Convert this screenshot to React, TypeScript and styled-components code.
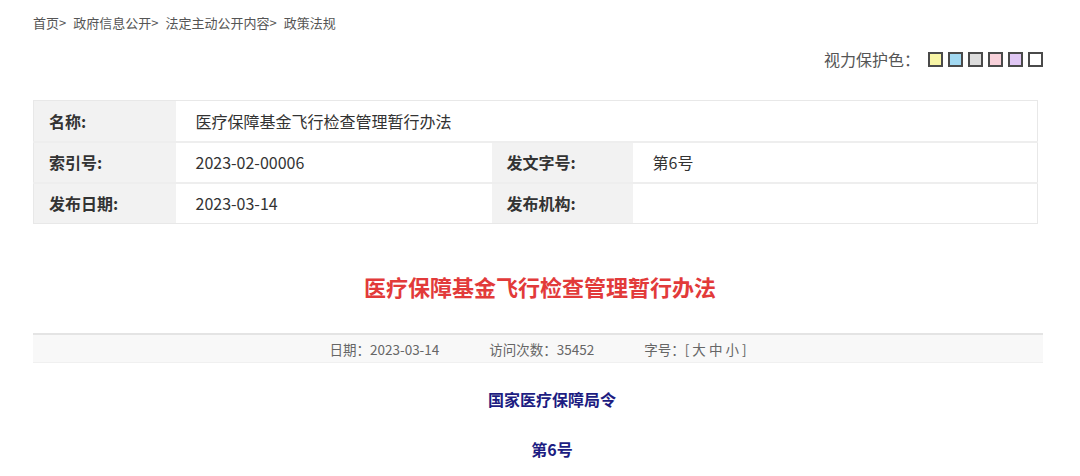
import React from "react";
import styled, { createGlobalStyle } from "styled-components";

const Global = createGlobalStyle`
  html, body { margin: 0; padding: 0; background: #fff; }
  body { font-family: "Noto Sans CJK SC", "Noto Sans", sans-serif; color: #333; }
`;

const Page = styled.div`
  width: 1010px;
  margin-left: 33px;
  padding-top: 13px;
  display: flex;
  flex-direction: column;
`;

const Crumbs = styled.div`
  font-size: 13px;
  line-height: 20px;
  color: #555;
  display: flex;
  gap: 7px;
`;

const Crumb = styled.span``;

const EyeRow = styled.div`
  margin-top: 14px;
  display: flex;
  justify-content: flex-end;
  align-items: center;
  height: 24px;
  width: 1010px;
`;

const EyeLabel = styled.span`
  font-size: 16px;
  color: #555;
  margin-right: 8px;
`;

const Swatches = styled.div`
  display: flex;
  gap: 5px;
`;

const Swatch = styled.span<{ $c: string }>`
  width: 11px;
  height: 11px;
  border: 2px solid #4a4a4a;
  background: ${(p) => p.$c};
  display: block;
`;

const InfoTable = styled.table`
  margin-top: 29px;
  width: 1005px;
  border-collapse: collapse;
  border: 1px solid #e8e8e8;
  table-layout: fixed;
  font-size: 16px;
`;

const Row = styled.tr`
  height: 41px;
  & + & td, & + & th { border-top: 2px solid #eeeeee; }
`;

const Label = styled.th`
  background: #f2f2f2;
  text-align: left;
  font-weight: bold;
  color: #333;
  padding: 0 0 0 15px;
`;

const Value = styled.td`
  padding: 0 0 0 20px;
  color: #333;
`;

const Title = styled.h1`
  margin: 47px 0 0;
  font-size: 22px;
  line-height: 30px;
  font-weight: bold;
  color: #e23a3a;
  text-align: center;
  width: 1010px;
  padding-left: 4px;
  box-sizing: border-box;
`;

const MetaBar = styled.div`
  margin-top: 32px;
  height: 27px;
  border-top: 2px solid #e4e4e4;
  border-bottom: 1px solid #f0f0f0;
  background: #f8f8f8;
  display: flex;
  justify-content: center;
  align-items: center;
  gap: 50px;
  font-size: 13.5px;
  color: #666;
`;

const MetaItem = styled.span``;

const Heading = styled.div<{ $top: number }>`
  margin-top: ${(p) => p.$top}px;
  font-size: 16px;
  line-height: 24px;
  font-weight: bold;
  color: #1d1d82;
  text-align: center;
  padding-left: 28px;
`;

const swatchColors = ["#f8f5a6", "#a2d9f2", "#dcdcdc", "#f8d1da", "#e0c7f4", "#ffffff"];

export default function App() {
  return (
    <>
      <Global />
      <Page>
        <Crumbs>
          <Crumb>首页&gt;</Crumb>
          <Crumb>政府信息公开&gt;</Crumb>
          <Crumb>法定主动公开内容&gt;</Crumb>
          <Crumb>政策法规</Crumb>
        </Crumbs>
        <EyeRow>
          <EyeLabel>视力保护色：</EyeLabel>
          <Swatches>
            {swatchColors.map((c) => (
              <Swatch key={c} $c={c} />
            ))}
          </Swatches>
        </EyeRow>
        <InfoTable>
          <colgroup>
            <col style={{ width: 142 }} />
            <col style={{ width: 316 }} />
            <col style={{ width: 141 }} />
            <col />
          </colgroup>
          <tbody>
            <Row>
              <Label>名称:</Label>
              <Value colSpan={3}>医疗保障基金飞行检查管理暂行办法</Value>
            </Row>
            <Row>
              <Label>索引号:</Label>
              <Value>2023-02-00006</Value>
              <Label>发文字号:</Label>
              <Value>第6号</Value>
            </Row>
            <Row>
              <Label>发布日期:</Label>
              <Value>2023-03-14</Value>
              <Label>发布机构:</Label>
              <Value></Value>
            </Row>
          </tbody>
        </InfoTable>
        <Title>医疗保障基金飞行检查管理暂行办法</Title>
        <MetaBar>
          <MetaItem>日期：2023-03-14</MetaItem>
          <MetaItem>访问次数：35452</MetaItem>
          <MetaItem>字号：[ 大 中 小 ]</MetaItem>
        </MetaBar>
        <Heading $top={24}>国家医疗保障局令</Heading>
        <Heading $top={26}>第6号</Heading>
      </Page>
    </>
  );
}
